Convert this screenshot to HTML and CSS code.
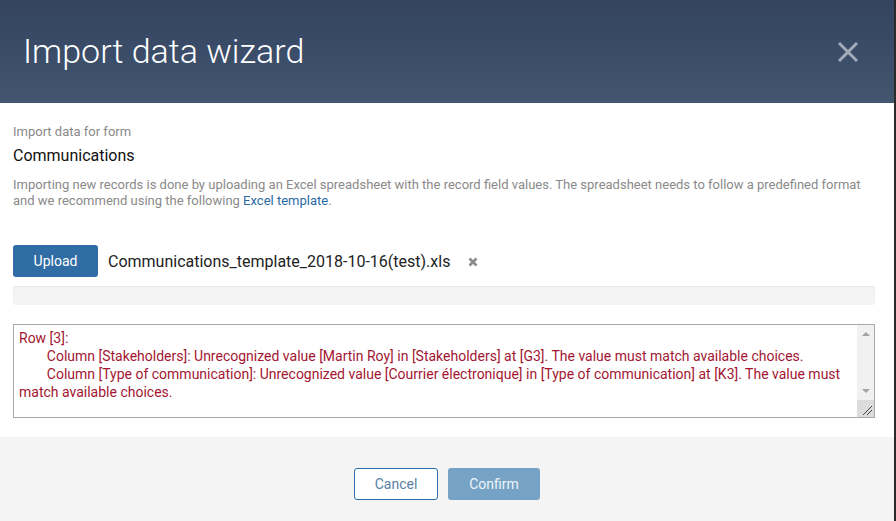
FILE: index.html
```html
<!DOCTYPE html>
<html>
<head>
<meta charset="utf-8">
<link rel="stylesheet" href="styles.css">
</head>
<body>
<div class="modal">
  <div class="header">
    <h1 class="title">Import data wizard</h1>
    <span class="close">
      <svg width="20" height="20" viewBox="0 0 20 20"><path d="M2 2 L18 18 M18 2 L2 18" stroke="#a3abb8" stroke-width="3" stroke-linecap="square"/></svg>
    </span>
  </div>
  <div class="body">
    <div class="label">Import data for form</div>
    <div class="form-name">Communications</div>
    <p class="desc">Importing new records is done by uploading an Excel spreadsheet with the record field values. The spreadsheet needs to follow a predefined format and we recommend using the following <a class="link">Excel template</a>.</p>
    <div class="upload-row">
      <button class="btn-upload">Upload</button>
      <span class="filename">Communications_template_2018-10-16(test).xls</span>
      <span class="remove">
        <svg width="10" height="10" viewBox="0 0 10 10"><path d="M1.5 1.5 L8.5 8.5 M8.5 1.5 L1.5 8.5" stroke="#8a8a8a" stroke-width="2.6"/></svg>
      </span>
    </div>
    <div class="progress"></div>
    <div class="errors">
      <div class="errors-text">Row [3]:
	Column [Stakeholders]: Unrecognized value [Martin Roy] in [Stakeholders] at [G3]. The value must match available choices.
	Column [Type of communication]: Unrecognized value [Courrier électronique] in [Type of communication] at [K3]. The value must match available choices.</div>
      <div class="scrollbar">
        <span class="arrow-up"></span>
        <span class="track"></span>
        <span class="arrow-down"></span>
        <span class="grip">
          <svg width="17" height="17" viewBox="0 0 17 17"><path d="M6 15 L15 6 M10 15 L15 10" stroke="#444" stroke-width="1"/></svg>
        </span>
      </div>
    </div>
  </div>
  <div class="footer">
    <button class="btn-cancel">Cancel</button>
    <button class="btn-confirm">Confirm</button>
  </div>
</div>
</body>
</html>
```
FILE: styles.css
```css
html, body {
  margin: 0;
  padding: 0;
  height: 100%;
}
body {
  background: #2a2a2a;
  font-family: Roboto, "Liberation Sans", sans-serif;
  overflow: hidden;
}
.modal {
  width: 894px;
  height: 521px;
  background: #fff;
  display: flex;
  flex-direction: column;
}
.header {
  height: 103px;
  background: linear-gradient(to bottom, #334360, #42566f);
  display: flex;
  align-items: center;
  justify-content: space-between;
  padding: 0 36px 0 23px;
  box-sizing: border-box;
  flex: none;
}
.title {
  margin: 0;
  font-size: 34px;
  font-weight: 300;
  color: #fff;
  padding-bottom: 2px;
}
.close {
  display: flex;
  width: 20px;
  height: 20px;
}
.body {
  padding: 21px 19px 19px 13px;
  flex: none;
}
.label {
  font-size: 13px;
  color: #8a8a8a;
  line-height: 16px;
}
.form-name {
  font-size: 16px;
  color: #111;
  line-height: 18px;
  margin-top: 7px;
}
.desc {
  margin: 12px 0 0;
  font-size: 13px;
  color: #8a8a8a;
  line-height: 16px;
}
.link {
  color: #2a6aa3;
}
.upload-row {
  display: flex;
  align-items: center;
  margin-top: 36px;
}
.btn-upload {
  width: 85px;
  height: 32px;
  border: none;
  border-radius: 3px;
  background: #2f6da4;
  color: #fff;
  font-family: inherit;
  font-size: 14px;
  padding: 0;
}
.filename {
  margin-left: 10px;
  font-size: 16px;
  color: #222;
}
.remove {
  display: flex;
  margin-left: 18px;
  margin-top: 1px;
}
.progress {
  margin-top: 9px;
  height: 19px;
  background: #f3f3f3;
  border-radius: 3px;
  box-shadow: inset 0 1px 1px #e6e6e6;
}
.errors {
  display: flex;
  margin-top: 19px;
  height: 94px;
  box-sizing: border-box;
  border: 1px solid #a9a9a9;
}
.errors-text {
  flex: 1;
  padding: 4px 12px 0 5px;
  font-size: 14px;
  line-height: 18px;
  color: #a31632;
  white-space: pre-wrap;
  tab-size: 8;
  overflow: hidden;
}
.scrollbar {
  width: 17px;
  background: #f1f1f1;
  display: flex;
  flex-direction: column;
  align-items: center;
}
.arrow-up {
  margin-top: 7px;
  width: 0;
  height: 0;
  border-left: 4px solid transparent;
  border-right: 4px solid transparent;
  border-bottom: 4px solid #a3a3a3;
}
.track {
  flex: 1;
}
.arrow-down {
  margin-bottom: 7px;
  width: 0;
  height: 0;
  border-left: 4px solid transparent;
  border-right: 4px solid transparent;
  border-top: 4px solid #a3a3a3;
}
.grip {
  display: flex;
  width: 17px;
  height: 17px;
  background: #dcdcdc;
}
.footer {
  flex: 1;
  background: #f4f4f4;
  display: flex;
  justify-content: center;
  align-items: flex-start;
  padding-top: 31px;
  gap: 10px;
}
.btn-cancel {
  width: 84px;
  height: 32px;
  background: #fff;
  border: 1px solid #2f6da4;
  border-radius: 3px;
  color: #5a7fa6;
  font-family: inherit;
  font-size: 14px;
  padding: 0;
}
.btn-confirm {
  width: 92px;
  height: 32px;
  background: #76a3c5;
  border: none;
  border-radius: 3px;
  color: #eef4f9;
  font-family: inherit;
  font-size: 14px;
  padding: 0;
}
```
